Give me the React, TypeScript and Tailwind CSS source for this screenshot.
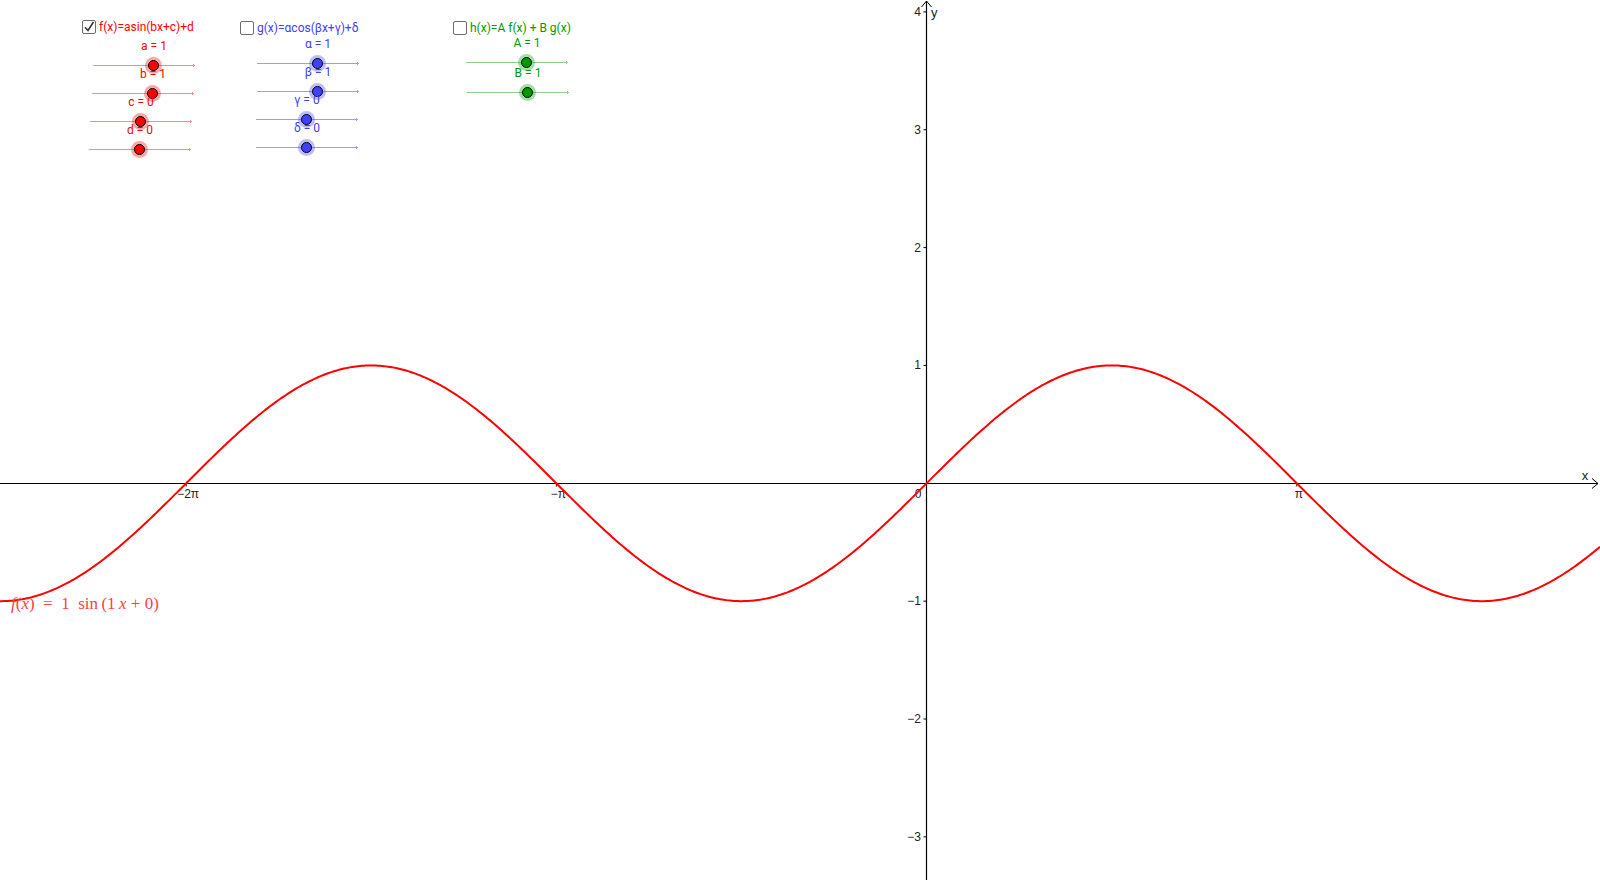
import React from "react";

const S = 117.85;
const OX = 926.6;
const OY = 483.3;

function curvePath() {
  let d = "";
  for (let px = 0; px <= 1600; px += 2) {
    const y = OY - S * Math.sin((px - OX) / S);
    d += (px === 0 ? "M" : "L") + px + " " + y.toFixed(2) + " ";
  }
  return d;
}

type Theme = {
  text: string;
  line: string;
  halo: string;
  fill: string;
};

const RED: Theme = {
  text: "text-[#ff0000]",
  line: "bg-[#ff8c8c]",
  halo: "bg-[#ff0000]/35",
  fill: "bg-[#ff0000]",
};
const BLUE: Theme = {
  text: "text-[#4040ff]",
  line: "bg-[#9a9aff]",
  halo: "bg-[#4040ff]/35",
  fill: "bg-[#4040ff]",
};
const GREEN: Theme = {
  text: "text-[#009900]",
  line: "bg-[#8fd08f]",
  halo: "bg-[#009900]/35",
  fill: "bg-[#009900]",
};

type SliderDef = { name: string; value: number; shift: string };

type GroupDef = {
  pos: string;
  label: string;
  checked: boolean;
  theme: Theme;
  list: string;
  row: string;
  sliders: SliderDef[];
};

const groups: GroupDef[] = [
  {
    pos: "left-[82px] top-[20px]",
    label: "f(x)=asin(bx+c)+d",
    checked: true,
    theme: RED,
    list: "mt-[4px] pl-[11px]",
    row: "h-[28px]",
    sliders: [
      { name: "a", value: 1, shift: "" },
      { name: "b", value: 1, shift: "-ml-[1px]" },
      { name: "c", value: 0, shift: "-ml-[3px]" },
      { name: "d", value: 0, shift: "-ml-[4px]" },
    ],
  },
  {
    pos: "left-[240px] top-[21px]",
    label: "g(x)=αcos(βx+γ)+δ",
    checked: false,
    theme: BLUE,
    list: "mt-[1px] pl-[17px]",
    row: "h-[28px]",
    sliders: [
      { name: "α", value: 1, shift: "" },
      { name: "β", value: 1, shift: "" },
      { name: "γ", value: 0, shift: "-ml-[1px]" },
      { name: "δ", value: 0, shift: "-ml-[1px]" },
    ],
  },
  {
    pos: "left-[453px] top-[21px]",
    label: "h(x)=A f(x) + B g(x)",
    checked: false,
    theme: GREEN,
    list: "-mt-[2px] pl-[13px]",
    row: "h-[30px]",
    sliders: [
      { name: "A", value: 1, shift: "" },
      { name: "B", value: 1, shift: "ml-[1px]" },
    ],
  },
];

function Slider({ s, theme, row }: { s: SliderDef; theme: Theme; row: string }) {
  const knob = 50 + s.value * 10;
  return (
    <div className={`flex flex-col justify-end w-[103px] ${row} ${s.shift}`}>
      <div className={`relative h-px w-[102px] ${theme.line}`}>
        <div className={`absolute left-[100px] top-[-1px] h-[3px] w-px ${theme.line}`} />
        <div
          className={`absolute whitespace-nowrap text-[12px] leading-none -translate-x-1/2 top-[-25px] ${theme.text}`}
          style={{ left: knob + 1 }}
        >
          {s.name} = {s.value}
        </div>
        <div
          className={`absolute top-[-8px] w-[17px] h-[17px] rounded-full ${theme.halo} flex items-center justify-center`}
          style={{ left: knob - 8 }}
        >
          <div className={`w-[11px] h-[11px] rounded-full border border-black ${theme.fill}`} />
        </div>
      </div>
    </div>
  );
}

function Checkbox({ checked }: { checked: boolean }) {
  return (
    <div className="w-[14px] h-[14px] border-[1.5px] border-[#6b6b6b] rounded-[2px] bg-white flex items-center justify-center">
      {checked && (
        <svg width="12" height="12" viewBox="0 0 12 12">
          <path d="M2 6.2 L5 9.5 L10.5 1" fill="none" stroke="#333" strokeWidth="1.6" />
        </svg>
      )}
    </div>
  );
}

function Group({ g }: { g: GroupDef }) {
  return (
    <div className={`absolute flex flex-col ${g.pos}`}>
      <div className="flex items-center gap-[3px]">
        <Checkbox checked={g.checked} />
        <span className={`text-[12px] leading-none whitespace-nowrap ${g.theme.text}`}>{g.label}</span>
      </div>
      <div className={`flex flex-col ${g.list}`}>
        {g.sliders.map((s) => (
          <Slider key={s.name} s={s} theme={g.theme} row={g.row} />
        ))}
      </div>
    </div>
  );
}

export default function App() {
  const yTicks = [4, 3, 2, 1, -1, -2, -3];
  const xTicks = [
    { v: -2 * Math.PI, l: "−2π" },
    { v: -Math.PI, l: "−π" },
    { v: Math.PI, l: "π" },
  ];
  const axisX = 926.5;
  const axisY = 483.5;
  return (
    <div className="relative w-[1600px] h-[880px] bg-white overflow-hidden font-['Roboto',sans-serif]">
      <svg className="absolute inset-0" width="1600" height="880" viewBox="0 0 1600 880">
        <g fontFamily="'Liberation Sans', Arial, sans-serif" fontSize="12" fill="#222">
          <line x1="0" y1={axisY} x2="1598" y2={axisY} stroke="#000" strokeWidth="1.2" />
          <path d={`M1592 ${axisY - 5} L1598 ${axisY} L1592 ${axisY + 5}`} fill="none" stroke="#000" strokeWidth="1" />
          <line x1={axisX} y1="1" x2={axisX} y2="880" stroke="#000" strokeWidth="1.2" />
          <path d={`M${axisX - 5} 7 L${axisX} 1 L${axisX + 5} 7`} fill="none" stroke="#000" strokeWidth="1" />
          {yTicks.map((t) => {
            const y = OY - t * S;
            return (
              <g key={t}>
                <line x1={axisX - 3} y1={y} x2={axisX} y2={y} stroke="#000" strokeWidth="1" />
                <text x={921} y={y + 4} textAnchor="end">
                  {t < 0 ? `−${-t}` : t}
                </text>
              </g>
            );
          })}
          {xTicks.map((t) => {
            const x = OX + t.v * S;
            return (
              <g key={t.l}>
                <line x1={x} y1={axisY} x2={x} y2={axisY + 3} stroke="#000" strokeWidth="1" />
                <text x={x + 2} y={498} textAnchor="middle">
                  {t.l}
                </text>
              </g>
            );
          })}
          <text x={918} y={498} textAnchor="middle">0</text>
          <text x={1585} y={480} textAnchor="middle" fontSize="13">x</text>
          <text x={931} y={17} fontSize="13">y</text>
        </g>
        <path d={curvePath()} fill="none" stroke="#ff0000" strokeWidth="2" />
      </svg>

      <div className="absolute left-[11px] top-[595px] text-[17px] leading-none text-[#ff4040] whitespace-nowrap font-['Liberation_Serif',serif]">
        <i>f</i>(<i>x</i>)&nbsp; =&nbsp; 1&nbsp; sin&thinsp;(1&thinsp;<i>x</i> + 0)
      </div>

      {groups.map((g) => (
        <Group key={g.label} g={g} />
      ))}
    </div>
  );
}
